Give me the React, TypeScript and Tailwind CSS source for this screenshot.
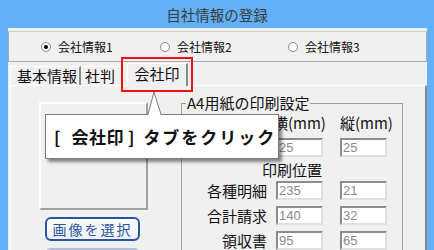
import React from "react";

function Radio({ checked, label, className }: { checked?: boolean; label: string; className?: string }) {
  return (
    <div className={"flex items-center " + (className ?? "")}>
      <div className="w-[10px] h-[10px] rounded-full border border-[#8a8a8a] bg-white flex items-center justify-center">
        {checked && <div className="w-[4px] h-[4px] rounded-full bg-black" />}
      </div>
      <span className="ml-[7px] text-[12px] leading-[14px] text-[#111]">{label}</span>
    </div>
  );
}

function Field({ value }: { value: string }) {
  return (
    <div className="w-[47px] h-[19px] bg-white border-2 border-t-[#8c8c8c] border-l-[#8c8c8c] border-r-[#e0e0e0] border-b-[#e0e0e0] flex items-center pl-[1px] font-['Liberation_Sans',sans-serif] text-[13px] leading-[15px] text-[#8a8a8a]">
      {value}
    </div>
  );
}

function Row({ label, a, b }: { label: string; a: string; b: string }) {
  return (
    <div className="flex items-center h-[19px] mt-[6px]">
      <div className="w-[85px] text-right text-[15px] leading-[18px] text-[#111]">{label}</div>
      <div className="ml-[9px]">
        <Field value={a} />
      </div>
      <div className="ml-[17px]">
        <Field value={b} />
      </div>
    </div>
  );
}

export default function App() {
  return (
    <div className="relative w-[434px] h-[250px] overflow-hidden bg-[#62b0f7] font-['Noto_Sans_CJK_JP','Noto_Sans',sans-serif]">
      <div className="h-[28px] flex items-center justify-center pt-[2px] text-[14.5px] text-[#3c3c3c]">
        自社情報の登録
      </div>
      <div className="ml-[8px] mr-[7px] h-[222px] bg-[#f0f0f0] flex flex-col">
        <div className="shrink-0 mt-[3px] h-[31px] border border-[#a8a8a8] border-t-[#cfcfcf] flex items-center pl-[32px]">
          <Radio checked label="会社情報1" className="w-[119px]" />
          <Radio label="会社情報2" className="w-[128px]" />
          <Radio label="会社情報3" />
        </div>
        <div className="shrink-0 h-[23px] flex items-end pl-[2px] text-[15px] text-[#111]">
          <div className="w-[71px] h-[19px] border-t border-l border-t-white border-l-white border-r-2 border-r-[#8a8a8a] flex items-center pl-[6px] leading-[18px]">
            基本情報
          </div>
          <div className="w-[42px] h-[19px] border-t border-t-white border-r-2 border-r-[#8a8a8a] flex items-center pl-[4px] leading-[18px]">
            社判
          </div>
          <div className="ml-[4px] w-[61px] h-[23px] mb-[-1px] relative z-10 bg-[#f0f0f0] border-t border-l border-t-white border-l-white border-r-2 border-r-[#8a8a8a] flex items-center justify-center pb-[2px] leading-[18px]">
            会社印
          </div>
        </div>
        <div className="flex-1 min-h-0 ml-[2px] border-t border-l border-t-white border-l-white border-r-2 border-r-[#8a8a8a] flex items-start overflow-hidden">
          <div className="ml-[28px] pt-[16px] w-[109px] shrink-0 flex flex-col">
            <div className="shrink-0 w-[109px] h-[108px] border-l-2 border-t-2 border-l-white border-t-white border-r-2 border-b-2 border-r-[#a0a0a0] border-b-[#a0a0a0]" />
            <div className="shrink-0 mt-[7px] ml-[6px] w-[95px] h-[24px] rounded-[6px] border-2 border-[#2b54a0] bg-gradient-to-b from-white to-[#eef0f6] flex items-center justify-center text-[14px] tracking-[2px] text-[#2b54a0]">
              画像を選択
            </div>
            <div className="shrink-0 mt-[7px] ml-[6px] w-[95px] h-[24px] rounded-[6px] border-2 border-[#b4bed8] bg-[#f4f4f4]" />
          </div>
          <div className="ml-[33px] mt-[17px] w-[222px] h-[200px] relative shrink-0 border border-[#a0a0a0]">
            <div className="absolute left-[4px] top-[-10px] px-[1px] bg-[#f0f0f0] text-[15px] leading-[18px] text-[#111]">
              A4用紙の印刷設定
            </div>
            <div className="flex flex-col">
              <div className="mt-[10px] h-[18px] flex text-[15px] leading-[18px] text-[#111]">
                <span className="ml-[91px] w-[67px]">横(mm)</span>
                <span>縦(mm)</span>
              </div>
              <div className="flex mt-[6px]">
                <div className="ml-[94px]">
                  <Field value="25" />
                </div>
                <div className="ml-[17px]">
                  <Field value="25" />
                </div>
              </div>
              <div className="mt-[4px] ml-[80px] text-[15px] leading-[18px] text-[#111]">印刷位置</div>
              <div className="mt-[-4px]">
                <Row label="各種明細" a="235" b="21" />
                <Row label="合計請求" a="140" b="32" />
                <Row label="領収書" a="95" b="65" />
              </div>
            </div>
          </div>
        </div>
      </div>

      {/* red highlight */}
      <div className="absolute left-[121px] top-[57px] w-[72px] h-[35px] border-2 border-[#ee1111] z-20" />

      {/* callout */}
      <div className="absolute left-[45px] top-[114px] w-[234px] h-[45px] bg-white border border-[#7a7a7a] shadow-[3px_3px_3px_rgba(0,0,0,0.45)] z-30 flex items-center pl-[8px] text-[17px] font-bold text-[#111]">
        <span>[</span>
        <span className="ml-[11px] tracking-[0.5px]">会社印</span>
        <span className="ml-[4px]">]</span>
        <span className="ml-[9px] tracking-[2px]">タブをクリック</span>
      </div>
      <svg className="absolute left-[146px] top-[91px] z-40" width="18" height="25" viewBox="0 0 18 25">
        <polygon points="2,24 8,1 15,24" fill="white" />
        <polyline points="2,23.5 8,1 15,23.5" fill="none" stroke="#7a7a7a" strokeWidth="1" />
      </svg>
    </div>
  );
}
